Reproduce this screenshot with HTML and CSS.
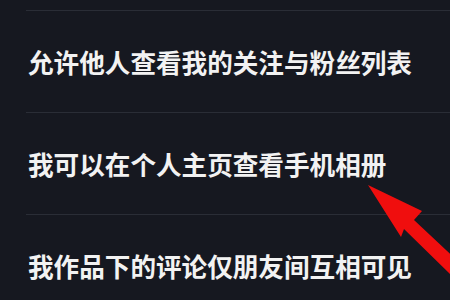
FILE: index.html
```html
<!DOCTYPE html>
<html lang="zh-CN">
<head>
<meta charset="utf-8">
<link rel="stylesheet" href="styles.css">
</head>
<body>
<div class="screen">
  <ul class="settings">
    <li class="row"><span class="label">允许他人查看我的关注与粉丝列表</span></li>
    <li class="row"><span class="label">我可以在个人主页查看手机相册</span></li>
    <li class="row"><span class="label">我作品下的评论仅朋友间互相可见</span></li>
  </ul>
  <svg class="arrow" width="450" height="300" viewBox="0 0 450 300" aria-hidden="true">
    <polygon points="368,185 422,211 414,220 462,265 452,276 404,229 401,237" fill="#f00e0e"/>
  </svg>
</div>
</body>
</html>
```
FILE: styles.css
```css
html, body {
  margin: 0;
  padding: 0;
  background: #161820;
}
.screen {
  position: relative;
  width: 450px;
  height: 300px;
  overflow: hidden;
  background: #161820;
}
.settings {
  list-style: none;
  margin: 10px 0 0 0;
  padding: 0 0 0 26px;
}
.row {
  height: 101px;
  border-top: 1.5px solid #2a2d36;
  display: flex;
  align-items: center;
  padding-left: 2px;
}
.label {
  font-family: "Noto Sans CJK SC", "Noto Sans", sans-serif;
  font-size: 25.6px;
  font-weight: 700;
  color: #f2f2f2;
  line-height: 1;
  white-space: nowrap;
}
.arrow {
  position: absolute;
  left: 0;
  top: 0;
}
```
